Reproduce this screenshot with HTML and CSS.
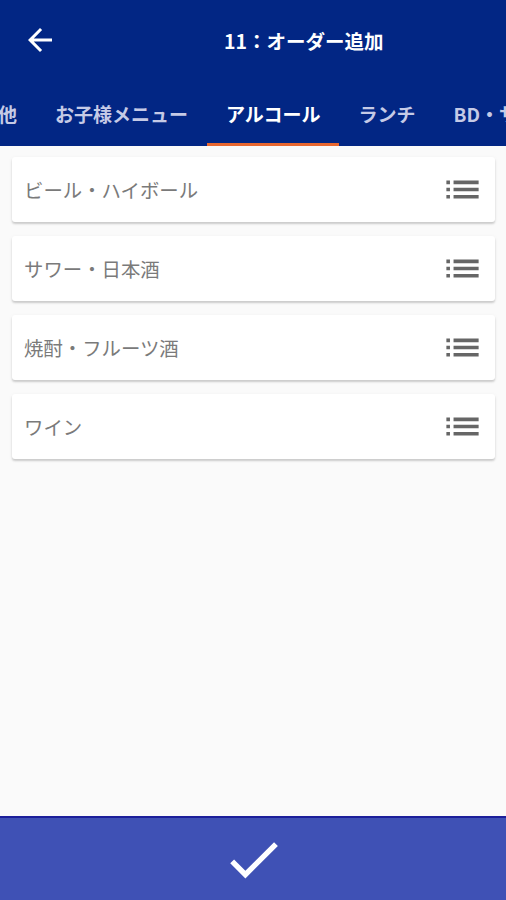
FILE: index.html
```html
<!DOCTYPE html>
<html lang="ja">
<head>
<meta charset="utf-8">
<link rel="stylesheet" href="styles.css">
</head>
<body>
<div class="app">
  <header class="header">
    <div class="toolbar">
      <svg class="back" viewBox="0 0 24 24"><path d="M20 11H7.83l5.59-5.59L12 4l-8 8 8 8 1.41-1.41L7.83 13H20v-2z" fill="#fff"/></svg>
      <div class="title">11：オーダー追加</div>
    </div>
    <nav class="tabs">
      <div class="tab">他</div>
      <div class="tab">お子様メニュー</div>
      <div class="tab active">アルコール</div>
      <div class="tab">ランチ</div>
      <div class="tab">BD・サ</div>
    </nav>
  </header>
  <main class="list">
    <div class="card"><span class="label">ビール・ハイボール</span><svg class="icon" viewBox="0 0 24 24"><path d="M3 13h2v-2H3v2zm0 4h2v-2H3v2zm0-8h2V7H3v2zm4 4h14v-2H7v2zm0 4h14v-2H7v2zM7 7v2h14V7H7z"/></svg></div>
    <div class="card"><span class="label">サワー・日本酒</span><svg class="icon" viewBox="0 0 24 24"><path d="M3 13h2v-2H3v2zm0 4h2v-2H3v2zm0-8h2V7H3v2zm4 4h14v-2H7v2zm0 4h14v-2H7v2zM7 7v2h14V7H7z"/></svg></div>
    <div class="card"><span class="label">焼酎・フルーツ酒</span><svg class="icon" viewBox="0 0 24 24"><path d="M3 13h2v-2H3v2zm0 4h2v-2H3v2zm0-8h2V7H3v2zm4 4h14v-2H7v2zm0 4h14v-2H7v2zM7 7v2h14V7H7z"/></svg></div>
    <div class="card"><span class="label">ワイン</span><svg class="icon" viewBox="0 0 24 24"><path d="M3 13h2v-2H3v2zm0 4h2v-2H3v2zm0-8h2V7H3v2zm4 4h14v-2H7v2zm0 4h14v-2H7v2zM7 7v2h14V7H7z"/></svg></div>
  </main>
  <footer class="footer">
    <svg class="check" viewBox="0 0 24 24"><path d="M9 16.17L4.83 12l-1.42 1.41L9 19 21 7l-1.41-1.41z" fill="#fff"/></svg>
  </footer>
</div>
</body>
</html>
```
FILE: styles.css
```css
html, body {
  margin: 0;
  padding: 0;
}
body {
  width: 506px;
  height: 900px;
  overflow: hidden;
  font-family: "Noto Sans CJK JP", "Noto Sans", Roboto, sans-serif;
  background: #fafafa;
}
.app {
  display: flex;
  flex-direction: column;
  height: 900px;
}
.header {
  background: #022684;
  color: #fff;
  flex: none;
}
.toolbar {
  height: 80px;
  display: flex;
  align-items: center;
  padding-left: 22px;
}
.back {
  width: 36px;
  height: 36px;
  margin-top: -1px;
}
.title {
  margin-left: 166px;
  font-size: 19.5px;
  font-weight: 700;
}
.tabs {
  height: 66px;
  display: flex;
  overflow: hidden;
  white-space: nowrap;
  margin-left: -21px;
}
.tab {
  flex: none;
  box-sizing: border-box;
  height: 66px;
  padding: 0 19px;
  display: flex;
  align-items: center;
  font-size: 19px;
  font-weight: 700;
  color: #c5cae6;
  border-bottom: 3px solid transparent;
  padding-top: 3px;
}
.tab.active {
  color: #fff;
  border-bottom-color: #e8672f;
}
.list {
  flex: 1;
  padding: 11px 11px 0 12px;
  display: flex;
  flex-direction: column;
  gap: 14px;
}
.card {
  height: 65px;
  background: #fff;
  border-radius: 3px;
  box-shadow: 0 2px 2px rgba(0,0,0,0.16), 0 1px 4px rgba(0,0,0,0.06);
  display: flex;
  align-items: center;
  padding: 0 11px 0 12px;
}
.label {
  flex: 1;
  font-size: 19.4px;
  color: #7a7a7a;
}
.icon {
  width: 43px;
  height: 43px;
  fill: #666;
}
.footer {
  flex: none;
  height: 82px;
  background: #3f51b5;
  border-top: 2px solid #1c1f9a;
  display: flex;
  align-items: center;
  justify-content: center;
}
.check {
  width: 65px;
  height: 65px;
}
```
